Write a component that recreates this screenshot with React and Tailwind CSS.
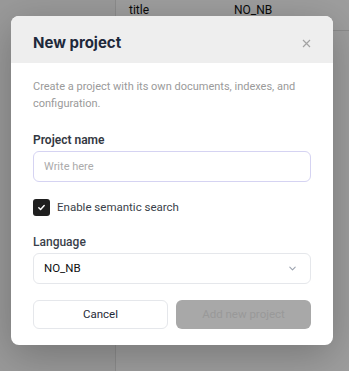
import React, { useState } from "react";

export default function App() {
	const [name, setName] = useState("");
	const [semantic, setSemantic] = useState(true);
	const [language, setLanguage] = useState("NO_NB");

	return (
		<div className="relative h-[371px] w-[349px] overflow-hidden bg-white font-['Roboto',sans-serif]">
			{/* page behind the dialog */}
			<div className="flex h-full">
				<div className="w-[115px] bg-[#f8f8f8]"></div>
				<div className="flex-1 border-l border-[#e2e2e2]">
					<div className="flex h-[31px] items-start border-b border-[#e2e2e2] text-[12px] text-[#111]">
						<span className="ml-[13px] w-[105px] pt-[1px]">title</span>
						<span className="pt-[1px]">NO_NB</span>
					</div>
				</div>
			</div>

			{/* overlay + dialog */}
			<div className="absolute inset-0 bg-black/[0.38] pl-[11px] pt-[16px]">
				<div className="w-[322px] overflow-hidden rounded-lg bg-white shadow-[0_10px_40px_rgba(0,0,0,0.25)]">
					<div className="flex h-[47px] items-center justify-between bg-[#eeeeee] px-[22px] pt-[8px]">
						<h2 className="font-['Inter',sans-serif] text-[15px] font-bold text-[#1e293b]">New project</h2>
						<button type="button" className="text-[#a3a3a3]">
							<svg width="9" height="9" viewBox="0 0 9 9" fill="none" stroke="currentColor" strokeWidth="1.2">
								<path d="M1 1l7 7M8 1L1 8" />
							</svg>
						</button>
					</div>

					<div className="px-[22px] pb-[16px] pt-[15px]">
						<p className="text-[11px] leading-[17px] text-[#9a9a9a]">
							Create a project with its own documents, indexes, and configuration.
						</p>

						<label htmlFor="projectName" className="mt-[20px] block text-[12px] font-semibold leading-[16px] text-[#333842]">
							Project name
						</label>
						<input
							id="projectName"
							type="text"
							autoFocus
							value={name}
							onChange={(e) => setName(e.target.value)}
							placeholder="Write here"
							className="mt-[3px] block h-[31px] w-full rounded-md border border-[#d5d3f2] px-[10px] text-[11px] text-[#111] caret-black outline-none placeholder:text-[#ababab]"
						/>

						<label className="mt-[17px] flex items-center gap-[7px] text-[11.5px] text-[#3a3f4a]">
							<button
								type="button"
								onClick={() => setSemantic(!semantic)}
								className="flex h-[17px] w-[17px] items-center justify-center rounded-[3px] bg-[#1f1f1f]"
							>
								{semantic && (
									<svg width="9" height="9" viewBox="0 0 10 10" fill="none" stroke="white" strokeWidth="1.6" strokeLinecap="round" strokeLinejoin="round">
										<path d="M2 5.2l2 2 4-4.4" />
									</svg>
								)}
							</button>
							Enable semantic search
						</label>

						<label className="mt-[18px] block text-[12px] font-medium leading-[16px] text-[#3a3f4a]">Language</label>
						<button
							type="button"
							onClick={() => setLanguage(language)}
							className="mt-[3px] flex h-[31px] w-full items-center justify-between rounded-md border border-[#e5e7eb] pl-[10px] pr-[13px] text-[11.5px] text-[#111]"
						>
							<span>{language}</span>
							<svg width="9" height="9" viewBox="0 0 10 10" fill="none" stroke="#9ca3af" strokeWidth="1.2" strokeLinecap="round" strokeLinejoin="round">
								<path d="M2 3.5l3 3 3-3" />
							</svg>
						</button>

						<div className="mt-[16px] grid grid-cols-2 gap-[8px]">
							<button type="button" className="h-[29px] rounded-md border border-[#e5e7eb] bg-white text-[11.5px] text-[#1f2937]">
								Cancel
							</button>
							<button type="button" disabled className="h-[29px] rounded-md bg-[#a8a8a8] text-[11.5px] text-[#999999]">
								Add new project
							</button>
						</div>
					</div>
				</div>
			</div>
		</div>
	);
}
